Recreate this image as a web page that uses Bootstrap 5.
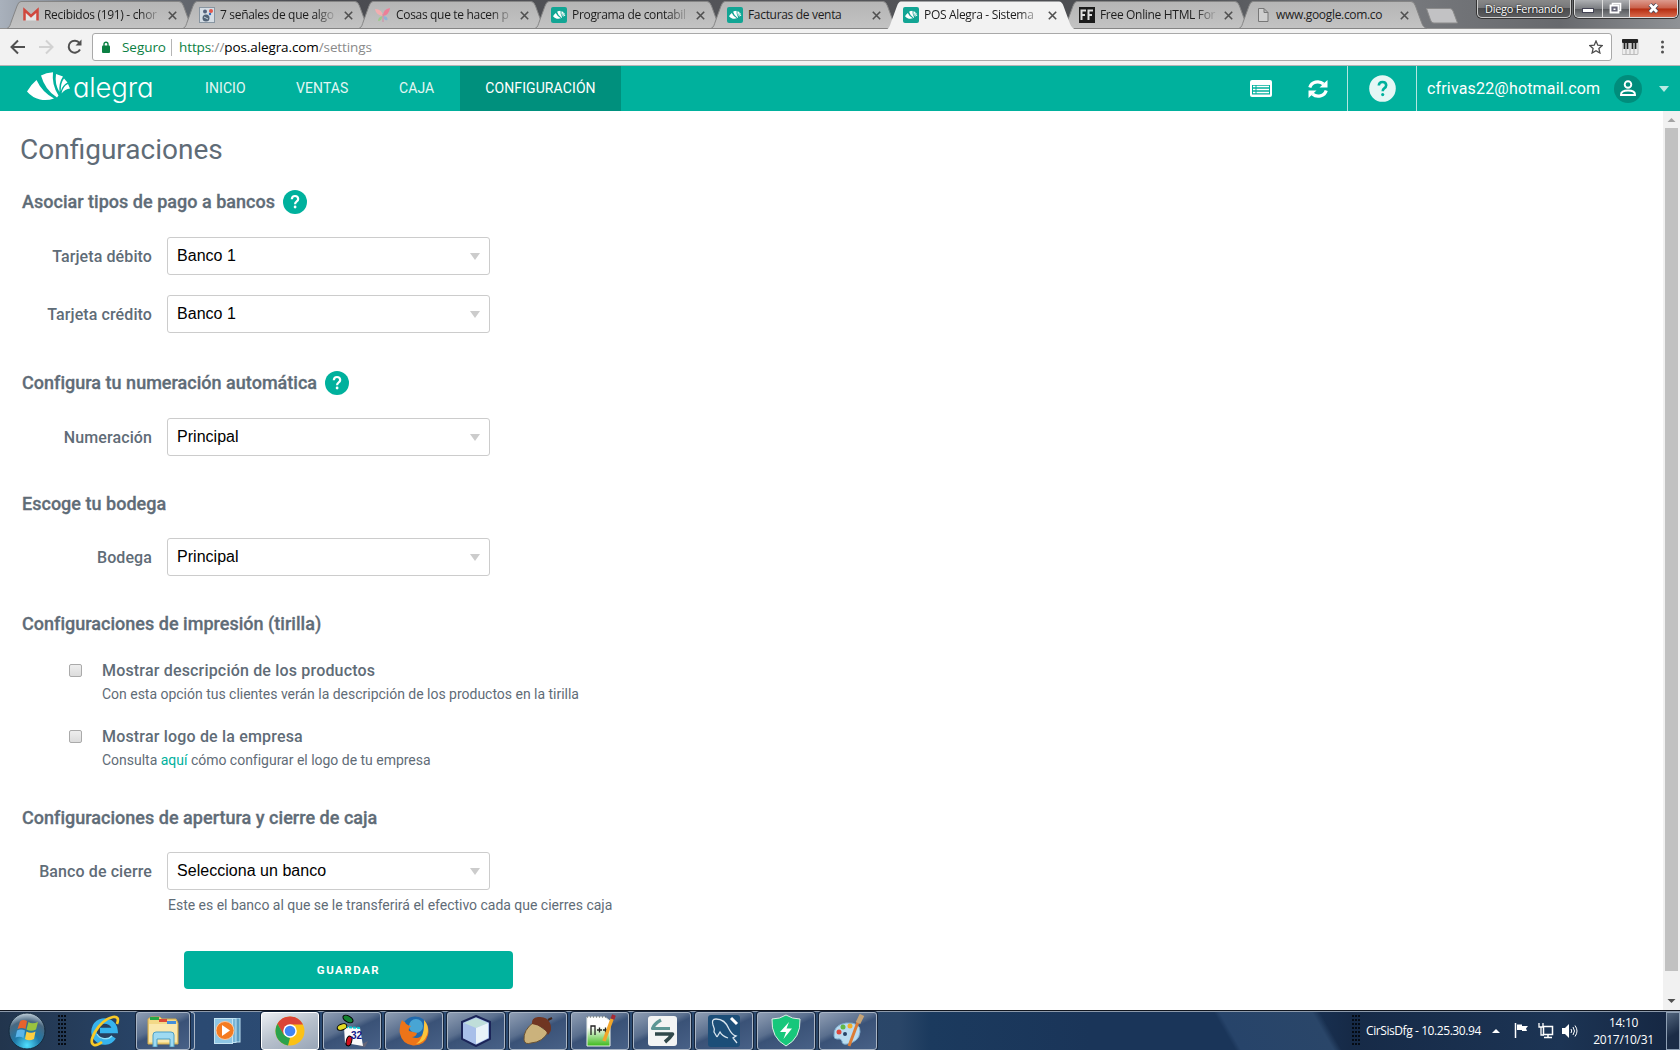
<!DOCTYPE html>
<html lang="es">
<head>
<meta charset="utf-8">
<title>POS Alegra</title>
<link href="https://cdn.jsdelivr.net/npm/bootstrap@5.3.0/dist/css/bootstrap.min.css" rel="stylesheet">
<style>
body{font-family:Roboto,"Liberation Sans",sans-serif;color:#5f6c77;width:1680px;height:1050px;overflow:hidden;background:#fff}
svg{display:block;flex:none}
.seg{font-family:"Open Sans","Noto Sans",sans-serif}
.strip{height:29px;background:linear-gradient(90deg,#a9b1bc 0,#777d86 90px,#4a4b50 300px,#55565a 800px,#4a4c50 1150px,#77797d 1400px,#67696d 1560px,#8f9296 1680px);border-bottom:1px solid #8f8f8f;padding-left:7px;position:relative;z-index:1}
.ctab{width:176px;height:28px;padding:2px 0 0 16px;position:relative}
.ctab .shape{position:absolute;left:0;top:0;overflow:visible}
.ctab.on{z-index:3}
.ctab .fav{position:relative;width:16px;margin-right:5px}
.ctab .ttl{position:relative;width:116px;font-size:12px;color:#1d1d1d;white-space:nowrap;letter-spacing:-.32px}
.ctab .fade-end{-webkit-mask-image:linear-gradient(90deg,#000 82%,rgba(0,0,0,.15) 99%);mask-image:linear-gradient(90deg,#000 82%,rgba(0,0,0,.15) 99%)}
.ctab .cls{position:relative;margin-left:8px}
.newtab{margin-left:10px;margin-top:8px}
.user{width:94px;height:18px;margin-left:18px;border:1px solid #ccc;border-top:0;border-radius:0 0 5px 5px;background:linear-gradient(#888,#77787a 45%,#4b4c4e 50%,#5b5c5e);color:#fff;font-size:11px;line-height:17px;letter-spacing:-.25px;box-shadow:0 0 0 1px #333;text-shadow:0 0 2px #000}
.wbtns{width:104px;height:18px;margin-left:3px;border:1px solid #ddd;border-top:0;border-radius:0 0 5px 5px;overflow:hidden;box-shadow:0 0 0 1px #333}
.wbtns>div{background:linear-gradient(#aeb0b3,#7c7e82 50%,#55575b 52%,#85888b);height:17px;border-right:1px solid #ddd}
.wbtns .wmin{width:28px}
.wbtns .wmax{width:27px}
.wbtns .wx{background:linear-gradient(#dd9b8e,#c9604a 48%,#b42c10 52%,#d9694b);border:0}
.tool{height:37px;background:#f2f2f2;border-bottom:1px solid #b6b4b6;padding-left:10px}
.omni{width:1520px;height:28px;border:1px solid #a9a9a9;border-radius:3px;background:#fff;font-size:13.5px}
.omni .secure{margin-left:8px;width:53px;color:#0b8043;letter-spacing:-.05px}
.omni .rule{width:1px;height:17px;background:#b5b5b5}
.omni .url{margin-left:7px;color:#8a8a8a;letter-spacing:-.1px}
.nav2{height:45px;background:#00b19d;color:#fff;font-size:14px}
.nav2 .lnk{height:45px;color:#e3f7f4;font-size:14px;letter-spacing:.1px}
.nav2 .lnk.cur{background:#00907d;width:161px;color:#fff}
.brandtxt{font-family:Inter,Lato,sans-serif;font-feature-settings:"cv11";font-weight:300;font-size:27.5px;line-height:40px;color:#fff;letter-spacing:-.2px;width:109px;padding-bottom:3px}
.vline{width:1px;height:45px;background:#b3e6e0}
.mail{margin-left:10px;width:187px;font-size:16px;letter-spacing:.17px}
.work{height:899px}
.pane{width:1663px;padding-left:20px}
.pgttl{font-size:28px;font-weight:400;line-height:36px;margin:21px 0 0 0}
.sect{font-size:18px;font-weight:500;height:24px;padding-left:2px;margin:0;letter-spacing:.02px;-webkit-text-stroke:.3px #5f6c77}
.frow{height:38px}
.frow .lab{width:132px;text-align:right;font-size:16px;font-weight:500;letter-spacing:.1px;margin-right:15px;padding-top:1px}
.sel{width:323px;height:38px;border:1px solid #ccc;border-radius:3px;color:#000;font:16px "Liberation Sans",sans-serif;padding:0 9px;letter-spacing:.03px}
.sel .cv{border:5px solid transparent;border-top:7px solid #ccc;border-bottom:0}
.chk{width:13px;height:13px;border:1px solid #aaa;border-radius:2px;background:linear-gradient(#eee,#dcdcdc);margin:4px 20px 0 49px}
.opt{font-size:16px;font-weight:500;line-height:22px;letter-spacing:.18px}
.hint{font-size:14px;line-height:20px;letter-spacing:-.015px}
.opt+.hint{margin-top:2px}
.hint a{color:#00b19d;text-decoration:none}
.save{width:329px;height:38px;background:#00b19d;border-radius:4px;color:#fff;font-size:11.5px;font-weight:700;letter-spacing:1.5px;margin:36px 0 0 164px;padding:2px 0 0;border:0}
.sbar{width:17px;background:#f1f1f1}
.sbar .thumb{width:13px;height:843px;background:#c1c1c1}
.tsk{height:40px;border-top:1px solid #10151e;box-shadow:inset 0 1px #8c99aa;background:linear-gradient(60deg,transparent 1070px,#27446a 1075px,#2a4669 1155px,transparent 1162px) 0 0/100% 100% no-repeat,linear-gradient(90deg,#22354d 0,#2b4a72 200px,#2d4d75 560px,#2a4668 900px,#1b3a5e 930px,#1a3559 1090px,#1a3559 1290px,#162a47 1350px,#1c3454 1560px,#152641 1680px)}
.tb{width:58px;height:38px;border:1px solid #a9b5c5;border-radius:3px;margin-right:4px;background:linear-gradient(155deg,#8e9db3 0,#5a6f8e 40%,#3a5277 50%,#486187);box-shadow:0 0 0 1px #16243a}
.tb.act{background:linear-gradient(155deg,#eceff3,#b7c0cc 50%,#98a5b7);border-color:#fff}
.tb.stack{width:54px;margin-right:1px}
.stackedge{width:4px;height:38px;border:1px solid #a9b5c5;border-left:0;border-radius:0 3px 3px 0}
.grip{width:9px;height:31px;background:radial-gradient(circle at 1px 1px,#050b14 .8px,transparent 1.1px) 0 0/3px 4px}
.tray{color:#fff;font-size:12px;letter-spacing:-.3px}
.desk{width:14px;height:38px;border:1px solid #8fa0b4;background:linear-gradient(150deg,#52657d,#1b2c46 60%)}
</style>
<script src="https://cdn.jsdelivr.net/npm/bootstrap@5.3.0/dist/js/bootstrap.bundle.min.js"></script>
</head>
<body>
<svg width="0" height="0" class="position-absolute">
 <defs>
  <linearGradient id="gt" x1="0" y1="0" x2="0" y2="1"><stop offset="0" stop-color="#b5b5b5"/><stop offset="1" stop-color="#c3c3c3"/></linearGradient>
  <symbol id="tabI" viewBox="0 0 190 29" overflow="visible"><path d="M0 28.500C3 27 3 25 4.500 21L10 6Q11.500 1.500 14 1.500H172Q175 1.500 176.500 6L182 21C183.500 25 184 27 188 28.500Z" fill="url(#gt)" stroke="#858585"/></symbol>
  <symbol id="tabA" viewBox="0 0 190 30" overflow="visible"><path d="M0 29.500C3 27 3 25 4.500 21L10 6Q11.500 1.500 14 1.500H172Q175 1.500 176.500 6L182 21C183.500 25 184 27 188 29.500Z" fill="#f2f2f2"/></symbol>
  <symbol id="x" viewBox="0 0 9 9"><path d="M.8.8l7.400 7.400M8.200.8L.8 8.200" stroke="#505050" stroke-width="1.600"/></symbol>
  <symbol id="fan" viewBox="0 0 43 30"><path d="M0 19.500Q4 12.500 9.500 8Q15 20 27 26.500Q20 29 13 27.500Q5 25.500 0 19.500ZM14 3.500Q19 .8 26 .3Q24.500 13 31.500 23.500L30 25.500Q18 18 14 3.500ZM29 2L36 4.500Q31.500 11 32.500 20Q27.500 12 29 2ZM37 6.500L40.500 10.500Q35.500 13 33.800 19Q33.500 11 37 6.500ZM41 12L43 16.500Q38 17 34.500 21.500Q36 14 41 12Z" fill="#fff"/></symbol>
  <symbol id="favA" viewBox="0 0 16 16"><rect width="16" height="16" rx="2" fill="#12a594"/><use href="#fan" x="2" y="3.500" width="12.500" height="9"/></symbol>
  <symbol id="help" viewBox="0 0 24 24"><circle cx="12" cy="12" r="12" fill="#00b19d"/><path d="M8.800 9.300Q9 6 12 6T15.200 9Q15.200 10.500 13.500 11.600Q12.100 12.500 12.100 14.200" fill="none" stroke="#fff" stroke-width="2.200"/><circle cx="12.100" cy="17" r="1.400" fill="#fff"/></symbol>
 </defs>
</svg>

<div class="strip d-flex align-items-start seg">
 <div class="ctab d-flex align-items-center"><svg class="shape" width="190" height="29"><use href="#tabI"/></svg>
  <svg class="fav" width="16" height="16"><path d="M1.500 13.500V3L8 9l6.500-6v10.500" fill="#e4e4e4" stroke="#d0473d" stroke-width="2.500"/></svg><span class="ttl fade-end">Recibidos (191) - chor</span><svg class="cls" width="9" height="9"><use href="#x"/></svg></div>
 <div class="ctab d-flex align-items-center"><svg class="shape" width="190" height="29"><use href="#tabI"/></svg>
  <svg class="fav" width="16" height="16"><rect x=".5" y=".5" width="15" height="15" fill="#d5dde4" stroke="#8895a1"/><circle cx="7" cy="11" r="3.500" fill="#536477"/><circle cx="6" cy="4.500" r="2" fill="#54627c"/><circle cx="12" cy="4" r="2" fill="#e2574a"/><circle cx="11" cy="7" r="1.200" fill="#3569bd"/><path d="M5 10l4 2" stroke="#c4d3dc"/></svg><span class="ttl fade-end">7 señales de que algo</span><svg class="cls" width="9" height="9"><use href="#x"/></svg></div>
 <div class="ctab d-flex align-items-center"><svg class="shape" width="190" height="29"><use href="#tabI"/></svg>
  <svg class="fav" width="16" height="16"><path d="M8 9Q1 8 0 2Q7 2 8 9Z" fill="#f3aeb0"/><path d="M8 9Q8 2 15 1Q14 8 8 9Z" fill="#ec7f98"/><path d="M7.500 9Q3 10 3 14Q7 14 7.500 9Z" fill="#9ec98b"/><path d="M8.500 9Q8.500 14 12.500 13Q13 9.500 8.500 9Z" fill="#8fb4d8"/><path d="M8 7v8" stroke="#d28ba5"/></svg><span class="ttl fade-end">Cosas que te hacen p</span><svg class="cls" width="9" height="9"><use href="#x"/></svg></div>
 <div class="ctab d-flex align-items-center"><svg class="shape" width="190" height="29"><use href="#tabI"/></svg>
  <svg class="fav" width="16" height="16"><use href="#favA"/></svg><span class="ttl fade-end">Programa de contabil</span><svg class="cls" width="9" height="9"><use href="#x"/></svg></div>
 <div class="ctab d-flex align-items-center"><svg class="shape" width="190" height="29"><use href="#tabI"/></svg>
  <svg class="fav" width="16" height="16"><use href="#favA"/></svg><span class="ttl">Facturas de venta</span><svg class="cls" width="9" height="9"><use href="#x"/></svg></div>
 <div class="ctab on d-flex align-items-center"><svg class="shape" width="190" height="30"><use href="#tabA"/></svg>
  <svg class="fav" width="16" height="16"><use href="#favA"/></svg><span class="ttl fade-end">POS Alegra - Sistema</span><svg class="cls" width="9" height="9"><use href="#x"/></svg></div>
 <div class="ctab d-flex align-items-center"><svg class="shape" width="190" height="29"><use href="#tabI"/></svg>
  <svg class="fav" width="16" height="16"><rect width="16" height="16" fill="#1b1b1b"/><path d="M2.500 13V3.500H7M2.500 8H6M9.500 13V3.500H14M9.500 8H13" fill="none" stroke="#ddd" stroke-width="2"/></svg><span class="ttl fade-end">Free Online HTML For</span><svg class="cls" width="9" height="9"><use href="#x"/></svg></div>
 <div class="ctab d-flex align-items-center"><svg class="shape" width="190" height="29"><use href="#tabI"/></svg>
  <svg class="fav" width="16" height="16"><path d="M3.500 1.500h5.500l4 4v9h-9.500zM9 1.500v4h4" fill="#cfcfcf" stroke="#777"/></svg><span class="ttl">www.google.com.co</span><svg class="cls" width="9" height="9"><use href="#x"/></svg></div>
 <svg class="newtab" width="34" height="16"><path d="M1.500.5H25Q27 .5 28 3L32.500 15H9Q6.500 15.500 5.500 12Z" fill="#c2c2c4" stroke="#8b8b8b"/></svg>
 <div class="user text-center">Diego Fernando</div>
 <div class="wbtns d-flex">
  <div class="wmin"><svg width="27" height="17"><rect x="7.500" y="8.500" width="11" height="4" fill="#fff" stroke="#445"/></svg></div>
  <div class="wmax"><svg width="26" height="17"><path d="M9.500 3.500h8v7h-8z" fill="none" stroke="#fff" stroke-width="1.600"/><path d="M7.500 5.500h8v7h-8z" fill="#667" stroke="#fff" stroke-width="1.800"/><path d="M10.500 8.500h2v1.500h-2z" fill="#fff"/></svg></div>
  <div class="wx flex-fill"><svg width="46" height="17"><path d="M20 4.500l7 7.500M27 4.500L20 12" stroke="#445" stroke-width="4.500"/><path d="M20 4.500l7 7.500M27 4.500L20 12" stroke="#fff" stroke-width="2.800"/></svg></div>
 </div>
</div>

<div class="tool d-flex align-items-center seg">
 <svg width="82" height="20"><path d="M15 10H2M8 3.500L1.500 10L8 16.500" fill="none" stroke="#505050" stroke-width="2"/><path d="M29 10h13M36 3.500L42.500 10L36 16.500" fill="none" stroke="#d2d2d2" stroke-width="2"/><path d="M69.500 6A6 6 0 1 0 70 12.500" fill="none" stroke="#505050" stroke-width="2"/><path d="M71.500 2.500v6h-6z" fill="#505050"/></svg>
 <div class="omni d-flex align-items-center">
  <svg width="9" height="12" class="ms-2"><rect x="1" y="4.500" width="8" height="7.500" rx="1" fill="#0b8043"/><path d="M3 5V3.200a2 2 0 0 1 4 0V5" fill="none" stroke="#0b8043" stroke-width="1.400"/></svg>
  <span class="secure ms-2 ps-1">Seguro</span>
  <span class="rule"></span>
  <span class="url"><span style="color:#0b8043">https</span>://<span style="color:#000">pos.alegra.com</span>/settings</span>
  <svg class="ms-auto me-2" width="14" height="14"><path d="M7 1l1.800 4.200 4.400.4-3.300 3 1 4.400L7 10.700 3.100 13l1-4.400-3.300-3 4.400-.4z" fill="none" stroke="#4c4c4c" stroke-width="1.300"/></svg>
 </div>
 <svg style="margin-left:10px" width="17" height="16"><rect width="16" height="15.500" rx="1" fill="#ededed" stroke="#999" stroke-width=".6"/><rect width="16" height="4" rx="1" fill="#222"/><path d="M2.500 3v7M5.500 3v7M10.500 3v7M13.500 3v7" stroke="#222" stroke-width="1.800"/><path d="M4 10v5M8 4v11M12 10v5" stroke="#999" stroke-width=".7"/></svg>
 <svg style="margin-left:21px" width="5" height="14"><circle cx="2.500" cy="2" r="1.500" fill="#505050"/><circle cx="2.500" cy="7" r="1.500" fill="#505050"/><circle cx="2.500" cy="12" r="1.500" fill="#505050"/></svg>
</div>

<nav class="nav2 d-flex align-items-center">
 <svg width="43" height="30" style="margin:0 3px 3px 27px"><use href="#fan"/></svg>
 <div class="brandtxt">alegra</div>
 <div class="lnk d-flex align-items-center" style="padding-left:23px;width:92px">INICIO</div>
 <div class="lnk d-flex align-items-center" style="padding-left:22px;width:102px">VENTAS</div>
 <div class="lnk d-flex align-items-center" style="padding-left:23px;width:84px">CAJA</div>
 <div class="lnk cur d-flex align-items-center justify-content-center">CONFIGURACIÓN</div>
 <svg class="ms-auto" width="22" height="18"><rect y="0" width="22" height="17" rx="2" fill="#fff"/><path d="M2 5h18v9.500H2z" fill="#00b19d"/><path d="M3 6.500h2.500M3 9.500h2.500M3 12.500h2.500M6.500 6.500h12.500M6.500 9.500h12.500M6.500 12.500h12.500" stroke="#fff" stroke-width="1.500"/></svg>
 <svg style="margin:0 19px 0 36px" width="20" height="20"><path d="M1.800 8.500A8.200 7.500 0 0 1 15.500 5M18.200 11.500A8.200 7.500 0 0 1 4.500 15" fill="none" stroke="#fff" stroke-width="3.200"/><path d="M19.500 1v7.500h-8zM.5 19v-7.500h8z" fill="#fff"/></svg>
 <div class="vline"></div>
 <svg style="margin:0 20px 0 21px" width="27" height="27"><circle cx="13.500" cy="13.500" r="13.300" fill="#e5f7f5"/><path d="M9.800 10.500Q10 7 13.500 7T17.200 10.200Q17.200 12 15.200 13.300Q13.700 14.300 13.700 16.200" fill="none" stroke="#00b19d" stroke-width="2.600"/><circle cx="13.700" cy="19.600" r="1.600" fill="#00b19d"/></svg>
 <div class="vline"></div>
 <span class="mail">cfrivas22@hotmail.com</span>
 <svg width="28" height="28"><circle cx="14" cy="14" r="14" fill="#008d7c"/><circle cx="14" cy="9.500" r="3.300" fill="none" stroke="#fff" stroke-width="1.900"/><path d="M7 19.500Q7 15.500 14 15.500T21 19.500V20H7Z" fill="none" stroke="#fff" stroke-width="1.900"/></svg>
 <svg style="margin:0 11px 0 17px" width="10" height="6"><path d="M0 0h10L5 6z" fill="#b8ebe4"/></svg>
</nav>

<div class="work d-flex">
 <main class="pane">
  <h1 class="pgttl">Configuraciones</h1>
  <h2 class="sect d-flex align-items-center" style="margin-top:22px">Asociar tipos de pago a bancos<svg width="24" height="24" class="ms-2"><use href="#help"/></svg></h2>
  <div class="frow d-flex align-items-center" style="margin-top:23px"><div class="lab">Tarjeta débito</div><div class="sel d-flex align-items-center justify-content-between">Banco 1<i class="cv"></i></div></div>
  <div class="frow d-flex align-items-center" style="margin-top:20px"><div class="lab">Tarjeta crédito</div><div class="sel d-flex align-items-center justify-content-between">Banco 1<i class="cv"></i></div></div>
  <h2 class="sect d-flex align-items-center" style="margin-top:38px">Configura tu numeración automática<svg width="24" height="24" class="ms-2"><use href="#help"/></svg></h2>
  <div class="frow d-flex align-items-center" style="margin-top:23px"><div class="lab">Numeración</div><div class="sel d-flex align-items-center justify-content-between">Principal<i class="cv"></i></div></div>
  <h2 class="sect d-flex align-items-center" style="margin-top:36px">Escoge tu bodega</h2>
  <div class="frow d-flex align-items-center" style="margin-top:22px"><div class="lab">Bodega</div><div class="sel d-flex align-items-center justify-content-between">Principal<i class="cv"></i></div></div>
  <h2 class="sect d-flex align-items-center" style="margin-top:36px">Configuraciones de impresión (tirilla)</h2>
  <div class="d-flex" style="margin-top:24px;height:66px"><div class="chk"></div><div><div class="opt">Mostrar descripción de los productos</div><div class="hint">Con esta opción tus clientes verán la descripción de los productos en la tirilla</div></div></div>
  <div class="d-flex" style="height:66px"><div class="chk"></div><div><div class="opt">Mostrar logo de la empresa</div><div class="hint">Consulta <a href="#">aquí</a> cómo configurar el logo de tu empresa</div></div></div>
  <h2 class="sect d-flex align-items-center" style="margin-top:14px">Configuraciones de apertura y cierre de caja</h2>
  <div class="frow d-flex align-items-center" style="margin-top:22px"><div class="lab">Banco de cierre</div><div class="sel d-flex align-items-center justify-content-between">Selecciona un banco<i class="cv"></i></div></div>
  <div class="hint" style="margin:5px 0 0 148px">Este es el banco al que se le transferirá el efectivo cada que cierres caja</div>
  <button class="save d-block">GUARDAR</button>
 </main>
 <div class="sbar d-flex flex-column align-items-center">
  <svg width="17" height="17"><path d="M4.500 11L8.500 7l4 4z" fill="#a3a3a3"/></svg><div class="thumb"></div><svg class="mt-auto" width="17" height="17"><path d="M4.500 6h8l-4 4z" fill="#505050"/></svg>
 </div>
</div>

<footer class="tsk d-flex align-items-center">
 <svg width="38" height="38" class="ms-2"><defs><radialGradient id="orb" cx=".5" cy=".9" r=".9"><stop offset="0" stop-color="#4fe0ff"/><stop offset=".4" stop-color="#1f79a8"/><stop offset=".75" stop-color="#4a6880"/><stop offset="1" stop-color="#c4d3de"/></radialGradient></defs><circle cx="19" cy="19" r="18" fill="url(#orb)" stroke="#152a3d"/><path d="M12 9.500Q15 7 19 9L17.500 17Q14 15 9.500 17Z" fill="#e8632c"/><path d="M20.500 10Q24 12.500 30 10L28 17.500Q23 20 18.500 17.500Z" fill="#9ac33f"/><path d="M9 18.500Q13 16.500 17 18.500L15.500 26Q12 24 7.500 25.500Z" fill="#5bb5ea"/><path d="M18.500 19.500Q23 22 27.500 19.500L26 27Q21 29.500 17 27Z" fill="#fcce41"/></svg>
 <div class="grip" style="margin-left:12px"></div>
 <svg style="margin:0 15px 0 22px" width="32" height="34"><path d="M24.500 23A10.500 10.500 0 1 1 26 16.500H11" fill="none" stroke="#37b3ed" stroke-width="5.500"/><path d="M23 22A9.500 9.500 0 0 1 8 20" fill="none" stroke="#8fe0fb" stroke-width="1.500"/><path d="M28 10Q31 2 24 3Q14 5 6 18Q0 29 5 31Q8 32 13 28" fill="none" stroke="#f8c928" stroke-width="2.700"/></svg>
 <div class="tb stack d-flex align-items-center justify-content-center"><svg width="34" height="32"><path d="M2 4l3-2h9l2 2h14l2 4v21H2z" fill="#f3d987" stroke="#d2aa4d"/><path d="M4 2h9v3H4z" fill="#28a745"/><path d="M13 4h8v3h-8z" fill="#dc4a35"/><path d="M21 6h9v3h-9z" fill="#448fdb"/><path d="M3 9h28v18H3z" fill="#fae8ad"/><path d="M7 32V20Q7 17 10 17H25Q28 17 28 20V32H24V24H11V32Z" fill="#9edaf2" stroke="#4d9ec5"/></svg></div>
 <div class="stackedge"></div>
 <svg style="margin:0 20px 0 19px" width="27" height="26"><rect x="8" width="18" height="24" fill="#5e9dc2" stroke="#bfe2f3"/><rect x="4" y=".5" width="18" height="24" fill="#79b6d8" stroke="#bfe2f3"/><rect x=".5" y=".5" width="18" height="25" fill="#8fc6e3" stroke="#c6e4f2"/><circle cx="11" cy="12.500" r="9" fill="#f47b20" stroke="#fcc9a0"/><path d="M8 7l8 5.500L8 18z" fill="#fff"/></svg>
 <div class="tb act d-flex align-items-center justify-content-center"><svg width="30" height="30"><circle cx="15" cy="15" r="14.500" fill="#fbc116"/><path d="M15 15L8.700 19L2.400 7.800A14.500 14.500 0 0 1 28 8.500H15Z" fill="#db4437"/><path d="M2.400 7.800L8.700 18.600L15 22L13 29.400A14.500 14.500 0 0 1 2.400 7.800Z" fill="#2ba24c"/><circle cx="15" cy="15" r="6.800" fill="#fff"/><circle cx="15" cy="15" r="5.300" fill="#4285f4"/></svg></div>
 <div class="tb d-flex align-items-center justify-content-center"><svg width="34" height="34"><path d="M23 32l10-5-3 6z" fill="#667"/><path d="M9 13l16 1 3 18-18-3z" fill="#fafafa"/><path d="M10 13l16 1" stroke="#08c4cc" stroke-width="2" stroke-dasharray="3 1"/><ellipse cx="13" cy="5" rx="5.500" ry="3" transform="rotate(30 13 5)" fill="#138330" stroke="#000"/><ellipse cx="7" cy="13" rx="5" ry="3" transform="rotate(-20 7 13)" fill="#e3d928" stroke="#000"/><ellipse cx="14" cy="27" rx="2.700" ry="5" transform="rotate(15 14 27)" fill="#d00f1c" stroke="#000"/><text x="16" y="25" font-size="10" font-weight="700" fill="#12188a" font-family="Liberation Sans">32</text></svg></div>
 <div class="tb d-flex align-items-center justify-content-center"><svg width="30" height="30"><circle cx="16" cy="14" r="13.500" fill="#2069ad"/><circle cx="17" cy="10" r="7" fill="#48a5d4"/><path d="M3 4Q0 10 .8 17Q3 28 14 29.500Q26 30 29 19Q31 11 25 4Q28 11 24 18Q20 24 13 21Q17 21 18 17L10 15Q9 12 12 10Q7 9 6 6Q4 6 3 4Z" fill="#ed7419"/><path d="M25 4Q31 11 28 19Q25 27 17 28Q26 22 25 4Z" fill="#fbc43b"/></svg></div>
 <div class="tb d-flex align-items-center justify-content-center"><svg width="30" height="32"><path d="M15 1L29 7V24L15 31L1 24V7Z" fill="#a8bfe9" stroke="#1b2458" stroke-width="2"/><path d="M15 3L27 8L15 13L3 8Z" fill="#bfded9"/><path d="M15 13L27 8V23L15 29Z" fill="#e9f3f8"/></svg></div>
 <div class="tb d-flex align-items-center justify-content-center"><svg width="32" height="32"><path d="M12 7Q1 15 2 25Q3 30 9 28Q21 27 26 17Z" fill="#cbb27c" stroke="#6b5334"/><path d="M10 9Q9 3 16 2Q25 1 28 8Q31 15 26 20Q23 11 10 9Z" fill="#703522"/><path d="M26 5l4-2" stroke="#41251b" stroke-width="2"/></svg></div>
 <div class="tb d-flex align-items-center justify-content-center"><svg width="32" height="34"><defs><linearGradient id="np" x1="0" y1="0" x2="0" y2="1"><stop offset=".35" stop-color="#fff"/><stop offset="1" stop-color="#3cb91a"/></linearGradient></defs><path d="M3 3h18l5 4v25H3z" fill="url(#np)" stroke="#e9eee9"/><path d="M3 3h20" stroke="#555" stroke-dasharray="1 2"/><path d="M7 21v-9h4v9M13 16h5M15.500 13.500v5M19 16h5M21.500 13.500v5" fill="none" stroke="#222" stroke-width="1.300"/><path d="M28 5L20 27" stroke="#f2a62a" stroke-width="3.500"/><path d="M30 1l-1.500 4" stroke="#a62b35" stroke-width="4"/></svg></div>
 <div class="tb d-flex align-items-center justify-content-center"><svg width="29" height="30"><rect width="29" height="30" rx="3" fill="#f3f4f4"/><path d="M13 4Q6 8 4.500 12.500H22" fill="none" stroke="#5d9795" stroke-width="3.200" stroke-linejoin="round"/><path d="M7 18H24.500Q22 22 17 26" fill="none" stroke="#31484b" stroke-width="3.600" stroke-linejoin="round"/></svg></div>
 <div class="tb d-flex align-items-center justify-content-center"><svg width="32" height="32"><rect width="32" height="32" rx="3" fill="#1c4e78"/><path d="M9 22L6 17Q7 14 5 10Q3 4 8 4Q17 4 21 14Q24 20 28 21L25 23L29 28M9 22L12 17Q14 21 20 23" fill="none" stroke="#d9e5ee" stroke-width="1.300"/><path d="M23 3l6 6" stroke="#fff" stroke-width="3"/></svg></div>
 <div class="tb d-flex align-items-center justify-content-center"><svg width="30" height="33"><path d="M15 1Q21 5 29 5Q30 24 15 32Q0 24 1 5Q9 5 15 1Z" fill="#17c77b" stroke="#e0eee8"/><path d="M18 8L9 18H15L12.500 25L21 14.500H15.500Z" fill="#fff"/></svg></div>
 <div class="tb d-flex align-items-center justify-content-center"><svg width="34" height="34"><path d="M3 22Q2 11 15 9Q30 8 29 18Q28 28 16 30Q11 31 11 27Q10 24 6 25Q3 25 3 22Z" fill="#b9dcf0" stroke="#7faed0"/><circle cx="8" cy="18" r="2.500" fill="#df493c"/><circle cx="12" cy="13" r="2.500" fill="#61b946"/><circle cx="19" cy="12" r="2.500" fill="#f2ae29"/><circle cx="14" cy="20" r="2" fill="#264467"/><path d="M27 8L18 32" stroke="#db7c35" stroke-width="3"/><path d="M31 1L27 9" stroke="#c6a477" stroke-width="5"/></svg></div>
 <div class="tray seg d-flex align-items-center ms-auto">
  <div class="grip"></div><span style="margin-left:5px;width:126px;letter-spacing:-.42px">CirSisDfg - 10.25.30.94</span>
  <svg width="8" height="5"><path d="M0 5l4-4 4 4z" fill="#fff"/></svg>
  <svg style="margin-left:14px" width="15" height="15"><path d="M1.500 0v15" stroke="#fff" stroke-width="1.500"/><path d="M3 1.500h5v1.500h6l-2 2.500 1 2.500H8V7H3z" fill="#fff"/></svg>
  <svg style="margin-left:9px" width="16" height="16"><path d="M5.500 3.500h9v8h-9zM10 12v2M6 14.500h8" fill="none" stroke="#fff" stroke-width="1.500"/><path d="M1 0v4h4V0M3 4v8h3" fill="none" stroke="#fff" stroke-width="1.300"/></svg>
  <svg style="margin-left:8px" width="16" height="14"><path d="M0 4h3l4-4v14l-4-4H0z" fill="#fff"/><path d="M9 5q1.500 2 0 4M11 3q3 4 0 8M13 1.500q4 5.500 0 11" fill="none" stroke="#fff"/></svg>
  <div class="text-center" style="width:87px;line-height:17px;padding-left:4px">14:10<br>2017/10/31</div>
  <div class="desk" style="margin:0 0 0 1px"></div>
 </div>
</footer>
</body>
</html>
